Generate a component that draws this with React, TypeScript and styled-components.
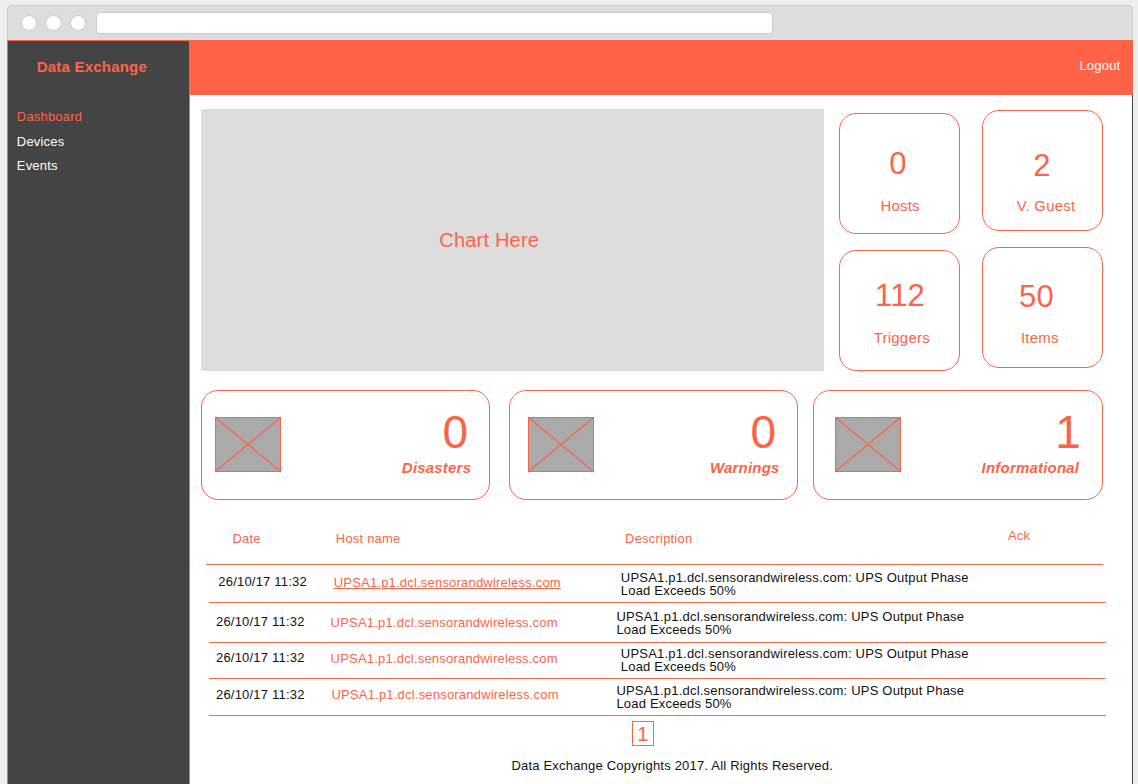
import React from "react";
import styled, { createGlobalStyle } from "styled-components";

const accent = "#ff6347";
const dark = "#444444";

const GlobalStyle = createGlobalStyle`
  * { box-sizing: border-box; }
  html, body { margin: 0; padding: 0; }
  body {
    background: #eeeeee;
    font-family: "Liberation Sans", Arial, sans-serif;
    font-size: 13px;
    line-height: 13px;
    letter-spacing: 0.2px;
    color: #111111;
    overflow: hidden;
  }
`;

const Page = styled.div`
  height: 784px;
  padding: 5px 5px 0 7px;
  display: flex;
  flex-direction: column;
  overflow: hidden;
`;

const BrowserBar = styled.div`
  height: 35px;
  flex: none;
  display: flex;
  align-items: flex-start;
  padding: 6px 0 0 13px;
  background: #dddddd;
  border: 1px solid #cccccc;
  border-bottom: 0;
  border-radius: 5px 5px 0 0;
`;

const WindowDot = styled.span<{ $gap: number; $size: number }>`
  width: ${(p) => p.$size}px;
  height: 16px;
  margin-top: 3px;
  margin-right: ${(p) => p.$gap}px;
  border: 1px solid #cccccc;
  border-radius: 50%;
  background: #ffffff;
`;

const AddressBar = styled.div`
  width: 677px;
  height: 22px;
  background: #ffffff;
  border: 1px solid #cccccc;
  border-radius: 4px;
`;

const Body = styled.div`
  flex: 1;
  display: flex;
  min-height: 0;
`;

const Sidebar = styled.aside`
  width: 183px;
  flex: none;
  background: ${dark};
  border: 1px solid ${accent};
  border-bottom: 0;
`;

const Brand = styled.h1`
  margin: 18px 0 0 28.8px;
  font-size: 15px;
  line-height: 15px;
  font-weight: bold;
  color: ${accent};
`;

const Nav = styled.nav`
  display: flex;
  flex-direction: column;
  margin: 36px 0 0 8.8px;
`;

const NavItem = styled.a<{ $active?: boolean; $height: number }>`
  height: ${(p) => p.$height}px;
  color: ${(p) => (p.$active ? accent : "#ffffff")};
`;

const Main = styled.main`
  flex: 1;
  display: flex;
  flex-direction: column;
  min-width: 0;
`;

const Header = styled.header`
  height: 55px;
  flex: none;
  display: flex;
  justify-content: flex-end;
  padding: 19px 12.6px 0 0;
  background: ${accent};
  color: #ffffff;
`;

const Content = styled.div`
  flex: 1;
  display: flex;
  flex-direction: column;
  background: #ffffff;
  border-right: 1px solid ${dark};
`;

const Overview = styled.section`
  display: flex;
  height: 295px;
  flex: none;
  padding: 14px 0 0 11px;
`;

const ChartArea = styled.div`
  width: 623px;
  height: 262px;
  padding: 121px 0 0 238.3px;
  background: #dddddd;
  color: ${accent};
  font-size: 20px;
  line-height: 20px;
`;

const StatColumn = styled.div<{ $top: number; $left: number }>`
  display: flex;
  flex-direction: column;
  gap: 16px;
  padding-top: ${(p) => p.$top}px;
  margin-left: ${(p) => p.$left}px;
`;

const StatCard = styled.div`
  width: 121px;
  height: 121px;
  border: 1px solid ${accent};
  border-radius: 17px;
  color: ${accent};
`;

const StatValue = styled.div<{ $top: number; $left: number }>`
  padding: ${(p) => p.$top}px 0 0 ${(p) => p.$left}px;
  font-size: 31px;
  line-height: 31px;
`;

const StatLabel = styled.div<{ $top: number; $left: number }>`
  padding: ${(p) => p.$top}px 0 0 ${(p) => p.$left}px;
  font-size: 15px;
  line-height: 15px;
`;

const Alerts = styled.section`
  display: flex;
  height: 110px;
  flex: none;
  padding-left: 11px;
`;

const AlertCard = styled.div<{ $width: number; $gap: number; $pad: number }>`
  width: ${(p) => p.$width}px;
  height: 110px;
  margin-right: ${(p) => p.$gap}px;
  padding: 26px 0 0 ${(p) => p.$pad}px;
  display: flex;
  border: 1px solid ${accent};
  border-radius: 17px;
  color: ${accent};
`;

const Placeholder = styled.svg`
  width: 66px;
  height: 55px;
  flex: none;
`;

const AlertText = styled.div<{ $right: number }>`
  flex: 1;
  display: flex;
  flex-direction: column;
  align-items: flex-end;
  margin-top: -8px;
  padding-right: ${(p) => p.$right}px;
`;

const AlertValue = styled.div<{ $shift: number }>`
  margin-right: ${(p) => p.$shift}px;
  font-size: 46px;
  line-height: 46px;
`;

const AlertLabel = styled.div`
  margin-top: 5px;
  font-size: 15px;
  line-height: 15px;
  font-weight: bold;
  font-style: italic;
`;

const Table = styled.section`
  display: flex;
  flex-direction: column;
`;

const Row = styled.div<{ $height: number; $left: number }>`
  display: grid;
  grid-template-columns: 115px 290px 370px 1fr;
  width: 897px;
  height: ${(p) => p.$height}px;
  margin-left: ${(p) => p.$left}px;
  border-bottom: 1px solid ${accent};
`;

const Cell = styled.div<{ $top: number; $left: number; $accent?: boolean; $underline?: boolean }>`
  padding: ${(p) => p.$top}px 0 0 ${(p) => p.$left}px;
  color: ${(p) => (p.$accent ? accent : "inherit")};
  text-decoration: ${(p) => (p.$underline ? "underline" : "none")};
  white-space: nowrap;
`;

const PageNumber = styled.div`
  width: 22px;
  height: 25px;
  margin: 5px 0 0 442px;
  padding: 2px 0 0 4.2px;
  border: 1px solid ${accent};
  color: ${accent};
  font-size: 20px;
  line-height: 20px;
`;

const Footer = styled.footer`
  margin: 13px 0 0 321.4px;
`;

interface Stat { value: string; label: string; vTop: number; vLeft: number; lTop: number; lLeft: number }

const statColumns: { top: number; left: number; stats: Stat[] }[] = [
  {
    top: 4,
    left: 15,
    stats: [
      { value: "0", label: "Hosts", vTop: 34, vLeft: 49.3, lTop: 19, lLeft: 40.4 },
      { value: "112", label: "Triggers", vTop: 29, vLeft: 35, lTop: 19, lLeft: 33.8 },
    ],
  },
  {
    top: 1,
    left: 22,
    stats: [
      { value: "2", label: "V. Guest", vTop: 39, vLeft: 50.3, lTop: 17, lLeft: 33.8 },
      { value: "50", label: "Items", vTop: 33, vLeft: 36, lTop: 18, lLeft: 38 },
    ],
  },
];

const alerts = [
  { value: "0", label: "Disasters", width: 289, gap: 19, pad: 13, right: 17.8, shift: 2.8 },
  { value: "0", label: "Warnings", width: 289, gap: 15, pad: 18, right: 17.4, shift: 3.4 },
  { value: "1", label: "Informational", width: 290, gap: 0, pad: 21, right: 22.8, shift: -1.8 },
];

const rows = [
  { h: 38, date: [9.3, 10], host: [9.7, 11], desc: [6.8, 6], underline: true },
  { h: 40, date: [7, 12], host: [6.6, 13], desc: [2.4, 7] },
  { h: 36, date: [7, 8], host: [6.6, 9], desc: [6.8, 4] },
  { h: 37, date: [7, 9], host: [7.5, 9], desc: [2.4, 5] },
];

const ImagePlaceholder = () => (
  <Placeholder viewBox="0 0 66 55">
    <rect x="0.5" y="0.5" width="65" height="54" fill="#aaaaaa" stroke={accent} />
    <path d="M0.5 0.5L65.5 54.5M65.5 0.5L0.5 54.5" stroke={accent} strokeWidth="1.2" fill="none" />
  </Placeholder>
);

export default function App() {
  return (
    <>
      <GlobalStyle />
      <Page>
        <BrowserBar>
          <WindowDot $size={16} $gap={8} />
          <WindowDot $size={17} $gap={8} />
          <WindowDot $size={16} $gap={10} />
          <AddressBar />
        </BrowserBar>
        <Body>
          <Sidebar>
            <Brand>Data Exchange</Brand>
            <Nav>
              <NavItem $active $height={25}>Dashboard</NavItem>
              <NavItem $height={24}>Devices</NavItem>
              <NavItem $height={24}>Events</NavItem>
            </Nav>
          </Sidebar>
          <Main>
            <Header>Logout</Header>
            <Content>
              <Overview>
                <ChartArea>Chart Here</ChartArea>
                {statColumns.map((c) => (
                  <StatColumn key={c.left} $top={c.top} $left={c.left}>
                    {c.stats.map((s) => (
                      <StatCard key={s.label}>
                        <StatValue $top={s.vTop} $left={s.vLeft}>{s.value}</StatValue>
                        <StatLabel $top={s.lTop} $left={s.lLeft}>{s.label}</StatLabel>
                      </StatCard>
                    ))}
                  </StatColumn>
                ))}
              </Overview>
              <Alerts>
                {alerts.map((a) => (
                  <AlertCard key={a.label} $width={a.width} $gap={a.gap} $pad={a.pad}>
                    <ImagePlaceholder />
                    <AlertText $right={a.right}>
                      <AlertValue $shift={a.shift}>{a.value}</AlertValue>
                      <AlertLabel>{a.label}</AlertLabel>
                    </AlertText>
                  </AlertCard>
                ))}
              </Alerts>
              <Table>
                <Row $height={65} $left={16}>
                  <Cell $top={32} $left={26.4} $accent>Date</Cell>
                  <Cell $top={32} $left={14.8} $accent>Host name</Cell>
                  <Cell $top={32} $left={14.1} $accent>Description</Cell>
                  <Cell $top={29} $left={27} $accent>Ack</Cell>
                </Row>
                {rows.map((r, i) => (
                  <Row key={i} $height={r.h} $left={19}>
                    <Cell $top={r.date[1]} $left={r.date[0]}>26/10/17 11:32</Cell>
                    <Cell $top={r.host[1]} $left={r.host[0]} $accent $underline={r.underline}>
                      UPSA1.p1.dcl.sensorandwireless.com
                    </Cell>
                    <Cell $top={r.desc[1]} $left={r.desc[0]}>
                      UPSA1.p1.dcl.sensorandwireless.com: UPS Output Phase
                      <br />
                      Load Exceeds 50%
                    </Cell>
                  </Row>
                ))}
              </Table>
              <PageNumber>1</PageNumber>
              <Footer>Data Exchange Copyrights 2017. All Rights Reserved.</Footer>
            </Content>
          </Main>
        </Body>
      </Page>
    </>
  );
}
